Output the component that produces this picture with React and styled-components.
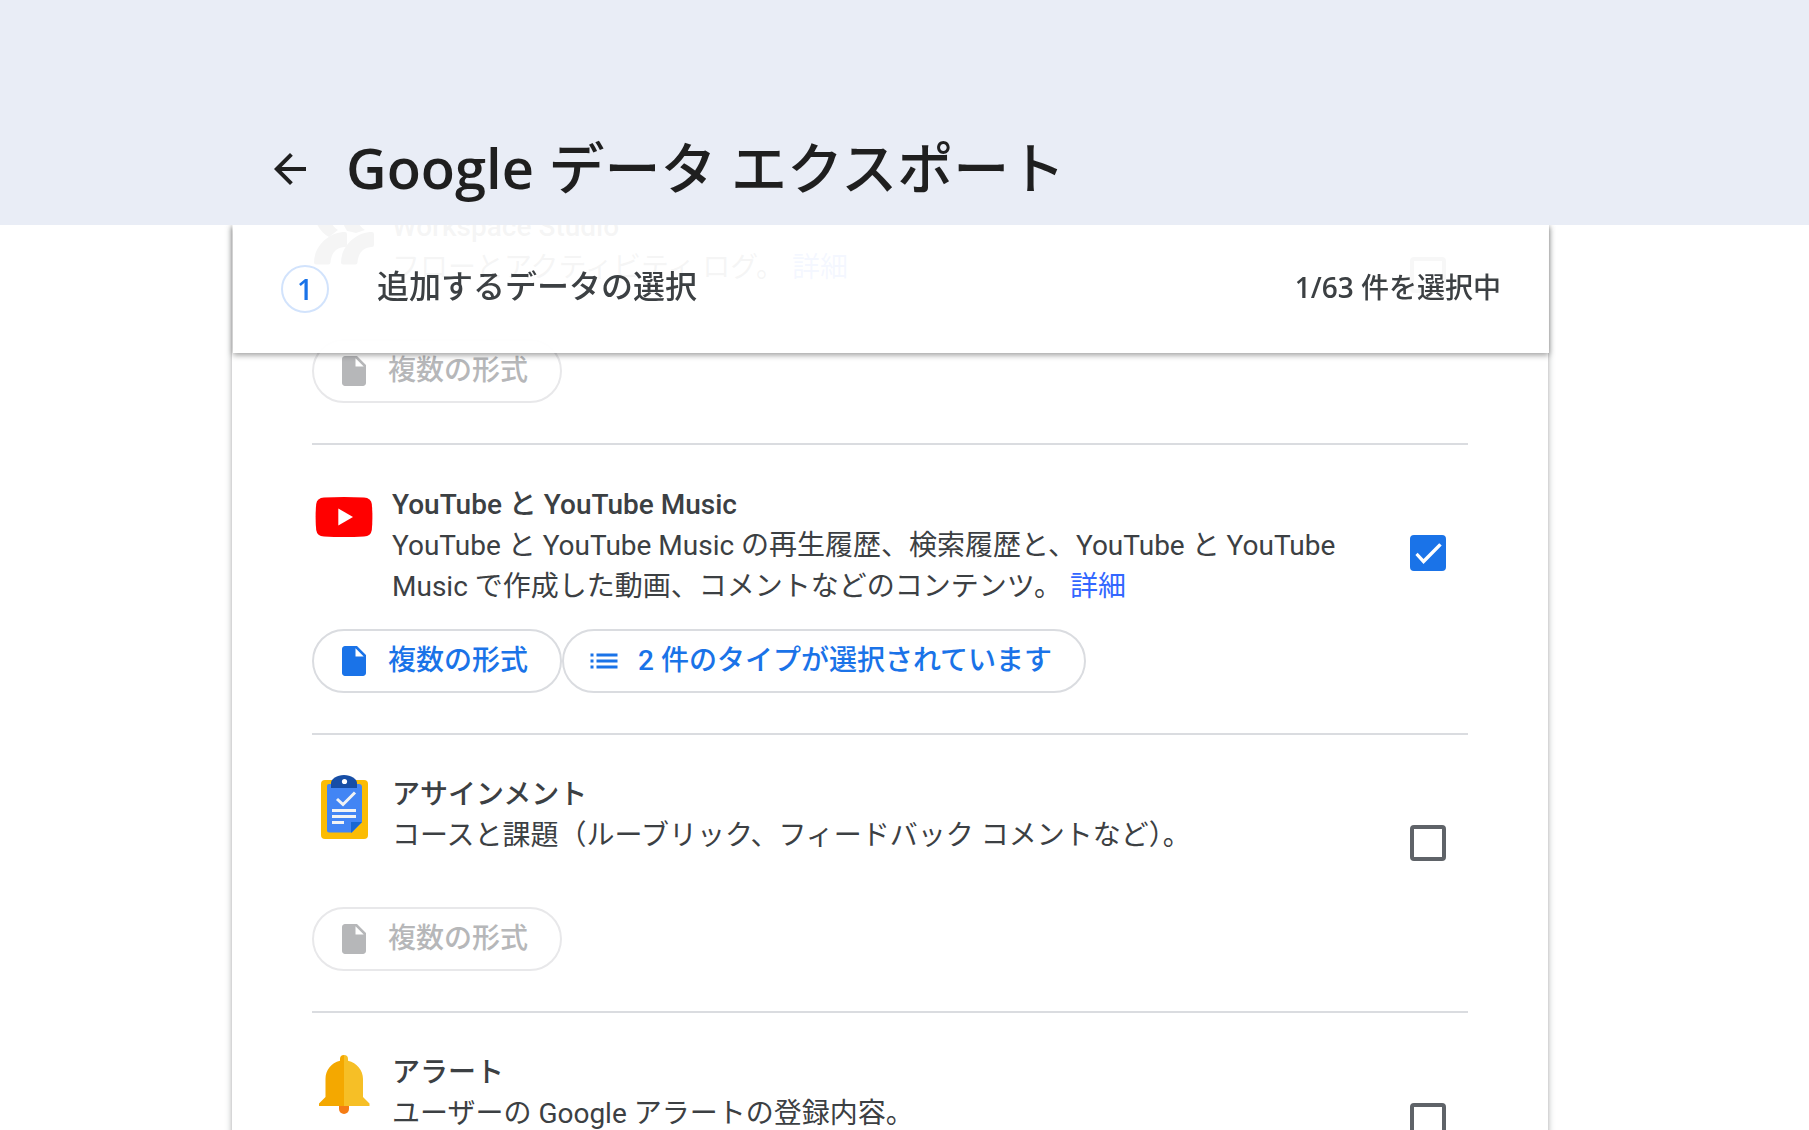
import React, { useState } from "react";
import styled, { createGlobalStyle, css } from "styled-components";

const GlobalStyle = createGlobalStyle`
  *, *::before, *::after { box-sizing: border-box; }
  html, body { margin: 0; height: 100%; }
  #root { height: 100%; }
  body {
    overflow: hidden;
    background: #fff;
    color: #3c4043;
    font-family: Roboto, "Noto Sans CJK JP", sans-serif;
  }
`;

const displayFont = css`
  font-family: "Open Sans", "Noto Sans CJK JP", sans-serif;
`;

const Page = styled.div`
  height: 100%;
  display: flex;
  flex-direction: column;
  overflow: hidden;
`;

const AppBar = styled.header`
  position: relative;
  z-index: 2;
  flex: none;
  display: flex;
  align-items: flex-end;
  gap: 32px;
  padding: 0 266px 24px;
  height: 225px;
  background: #e9edf6;
`;

const BackButton = styled.button`
  display: flex;
  align-items: center;
  height: 64px;
  padding: 0;
  border: 0;
  background: none;
  color: #1f1f1f;
  cursor: pointer;
`;

const PageTitle = styled.h1`
  ${displayFont}
  margin: 0;
  font-size: 56px;
  font-weight: 500;
  line-height: 68px;
  color: #1f1f1f;
`;

const Latin = styled.span`
  font-weight: 600;
`;

const Content = styled.main`
  flex: 1;
  min-height: 0;
  padding: 0 261px 0 232px;
`;

const Card = styled.section`
  background: #fff;
  box-shadow: 0 2px 4px rgba(60, 64, 67, 0.3), 0 2px 6px 2px rgba(60, 64, 67, 0.15);
`;

const StepHeader = styled.div`
  position: sticky;
  top: 0;
  z-index: 1;
  display: flex;
  align-items: center;
  gap: 48px;
  height: 128px;
  margin: 0 -1px 0 1px;
  padding: 0 48px;
  background: rgba(255, 255, 255, 0.95);
  box-shadow: 0 2px 6px rgba(0, 0, 0, 0.4);
`;

const StepNumber = styled.span`
  ${displayFont}
  display: flex;
  align-items: center;
  justify-content: center;
  width: 48px;
  height: 48px;
  border: 2px solid #d2e3fc;
  border-radius: 50%;
  font-size: 28px;
  font-weight: 600;
  color: #1a73e8;
`;

const StepTitle = styled.h2`
  margin: 0;
  flex: 1;
  padding-bottom: 4px;
  font-size: 32px;
  font-weight: 500;
  line-height: 48px;
`;

const StepStatus = styled.span`
  ${displayFont}
  padding-bottom: 4px;
  font-size: 28px;
  font-weight: 500;
  line-height: 40px;
`;

const ProductList = styled.ul`
  list-style: none;
  margin: -186px 0 0;
  padding: 0 80px;
`;

const Product = styled.li`
  padding: 40px 0;
  border-bottom: 2px solid #dadce0;
`;

const Summary = styled.div`
  display: grid;
  grid-template-columns: 64px 1fr 36px;
  column-gap: 16px;
  min-height: 110px;
  margin-bottom: 22px;
  padding-right: 22px;
`;

const ProductText = styled.div`
  padding-right: 32px;
`;

const ProductName = styled.label`
  display: block;
  font-size: 28px;
  font-weight: 500;
  line-height: 40px;
`;

const Description = styled.p`
  margin: 0;
  font-size: 28px;
  line-height: 41px;
`;

const DetailsLink = styled.a`
  margin-left: 8px;
  color: #3367ff;
  text-decoration: none;
`;

const Checkbox = styled.input`
  appearance: none;
  display: grid;
  place-content: center;
  width: 36px;
  height: 36px;
  margin: 50px 0 0;
  border: 4px solid #5f6368;
  border-radius: 4px;
  cursor: pointer;

  &:checked {
    border-color: #1a73e8;
    background: #1a73e8;
  }

  &:checked::before {
    content: "";
    width: 28px;
    height: 28px;
    background: #fff;
    clip-path: polygon(5% 57%, 13% 49%, 34% 71%, 90% 15%, 99% 23%, 34% 89%);
  }
`;

const Actions = styled.div`
  display: flex;
`;

const Pill = styled.button`
  display: flex;
  align-items: center;
  gap: 16px;
  height: 64px;
  padding: 0 32px 0 22px;
  border: 2px solid #dadce0;
  border-radius: 32px;
  background: none;
  font: 500 28px/40px Roboto, "Noto Sans CJK JP", sans-serif;
  color: #1a73e8;
  cursor: pointer;

  &:disabled {
    border-color: #e8e8ea;
    color: #b6b7b9;
    cursor: default;
  }
`;

function BackIcon() {
  return (
    <svg width="48" height="48" viewBox="0 0 24 24" fill="currentColor" aria-hidden="true">
      <path d="M20 11H7.800l5.600-5.600L12 4l-8 8 8 8 1.400-1.400L7.800 13H20z" />
    </svg>
  );
}

function FileIcon() {
  return (
    <svg width="36" height="36" viewBox="0 0 24 24" fill="currentColor" aria-hidden="true">
      <path d="M6 2c-1.1 0-2 .9-2 2v16c0 1.1.9 2 2 2h12c1.1 0 2-.9 2-2V8l-6-6H6zm7 7V3.5L18.5 9H13z" />
    </svg>
  );
}

function ListIcon() {
  return (
    <svg width="36" height="36" viewBox="0 0 24 24" fill="currentColor" aria-hidden="true">
      <path d="M3 13h2v-2H3v2zm0 4h2v-2H3v2zm0-8h2V7H3v2zm4 4h14v-2H7v2zm0 4h14v-2H7v2zM7 7v2h14V7H7z" />
    </svg>
  );
}

function StudioIcon() {
  return (
    <svg width="64" height="64" viewBox="0 0 64 64" fill="#3c4043" aria-hidden="true">
      <path d="M2 55.500C2 39 17 25 33 25q2 0 2 2v11q0 2-2 2c-9 0-14 7-14.500 15.500q0 2-2 2H4q-2 0-2-2z" />
      <path d="M29 55.500C29 39 44 25 60 25q2 0 2 2v11q0 2-2 2c-9 0-14 7-14.500 15.500q0 2-2 2H31q-2 0-2-2z" />
      <path d="M2 4h15c0 10 3 15 9 19l-9 7C8 25 2 15 2 4z" />
      <path d="M29 4h15c0 10 3 15 9 19l-9 3c-3-1-5-1-9-2-4-6-6-13-6-20z" />
    </svg>
  );
}

function YouTubeIcon() {
  return (
    <svg width="64" height="64" viewBox="0 0 64 64" aria-hidden="true">
      <path
        fill="#f00"
        d="M12 12.500Q32 11.400 52 12.500Q59 13 59.800 19Q61 32 59.800 45Q59 51 52 51.500Q32 52.600 12 51.500Q5 51 4.200 45Q3 32 4.200 19Q5 13 12 12.500Z"
      />
      <path fill="#fff" d="M26.300 23.500v17L41 32z" />
    </svg>
  );
}

function AssignmentIcon() {
  return (
    <svg width="64" height="64" viewBox="0 0 64 64" aria-hidden="true">
      <rect x="9" y="5" width="47" height="59" rx="4" fill="#fbbc04" />
      <path fill="#4285f4" d="M17 9h30a3 3 0 0 1 3 3v35L40 57.500H17a2 2 0 0 1-2-2V11a2 2 0 0 1 2-2z" />
      <path fill="#1967d2" d="M39 47h11L39 58z" />
      <path fill="#174ea6" d="M19 13V8C19 4 25 0 32 0s13 4 13 8v5z" />
      <circle cx="32.500" cy="6.500" r="2.600" fill="#fff" />
      <path fill="none" stroke="#f1f3f4" strokeWidth="3" d="M25 24l6 5.500 12-12" />
      <path fill="#f1f3f4" d="M20 34h24v3H20zM20 40h24v3H20zM20 46h12v3H20z" />
    </svg>
  );
}

function BellIcon() {
  return (
    <svg width="64" height="64" viewBox="0 0 64 64" aria-hidden="true">
      <path fill="#f57c14" d="M27 53h10v3a5 5 0 0 1-10 0z" />
      <path fill="#f4a800" d="M32 2a4 4 0 0 0-4 4v1.700C19 10 13.500 17 13.500 26v18L7 50.500V53h25z" />
      <path fill="#f6bf26" d="M32 2a4 4 0 0 1 4 4v1.700C45 10 51 17 51 26v18l6.500 6.500V53H32z" />
    </svg>
  );
}

const PRODUCTS = [
  {
    id: "studio",
    name: "Workspace Studio",
    icon: StudioIcon,
    description: "フローとアクティビティ ログ。",
    details: true,
  },
  {
    id: "youtube",
    name: "YouTube と YouTube Music",
    icon: YouTubeIcon,
    description:
      "YouTube と YouTube Music の再生履歴、検索履歴と、YouTube と YouTube Music で作成した動画、コメントなどのコンテンツ。",
    details: true,
    types: "2 件のタイプが選択されています",
  },
  {
    id: "assignments",
    name: "アサインメント",
    icon: AssignmentIcon,
    description: "コースと課題（ルーブリック、フィードバック コメントなど）。",
  },
  {
    id: "alerts",
    name: "アラート",
    icon: BellIcon,
    description: "ユーザーの Google アラートの登録内容。",
  },
];

function ProductRow({ product, checked, onToggle }) {
  const Icon = product.icon;
  return (
    <Product>
      <Summary>
        <Icon />
        <ProductText>
          <ProductName htmlFor={product.id}>{product.name}</ProductName>
          <Description>
            {product.description}
            {product.details && <DetailsLink href="#details">詳細</DetailsLink>}
          </Description>
        </ProductText>
        <Checkbox type="checkbox" id={product.id} checked={checked} onChange={onToggle} />
      </Summary>
      <Actions>
        <Pill type="button" disabled={!checked}>
          <FileIcon />
          複数の形式
        </Pill>
        {product.types && (
          <Pill type="button" disabled={!checked}>
            <ListIcon />
            {product.types}
          </Pill>
        )}
      </Actions>
    </Product>
  );
}

export default function App() {
  const [selected, setSelected] = useState(["youtube"]);

  const toggle = (id) =>
    setSelected((ids) => (ids.includes(id) ? ids.filter((item) => item !== id) : [...ids, id]));

  return (
    <Page>
      <GlobalStyle />
      <AppBar>
        <BackButton type="button" aria-label="戻る">
          <BackIcon />
        </BackButton>
        <PageTitle>
          <Latin>Google</Latin> データ エクスポート
        </PageTitle>
      </AppBar>
      <Content>
        <Card>
          <StepHeader>
            <StepNumber>1</StepNumber>
            <StepTitle>追加するデータの選択</StepTitle>
            <StepStatus>
              <Latin>{selected.length}/63</Latin> 件を選択中
            </StepStatus>
          </StepHeader>
          <ProductList>
            {PRODUCTS.map((product) => (
              <ProductRow
                key={product.id}
                product={product}
                checked={selected.includes(product.id)}
                onToggle={() => toggle(product.id)}
              />
            ))}
          </ProductList>
        </Card>
      </Content>
    </Page>
  );
}
